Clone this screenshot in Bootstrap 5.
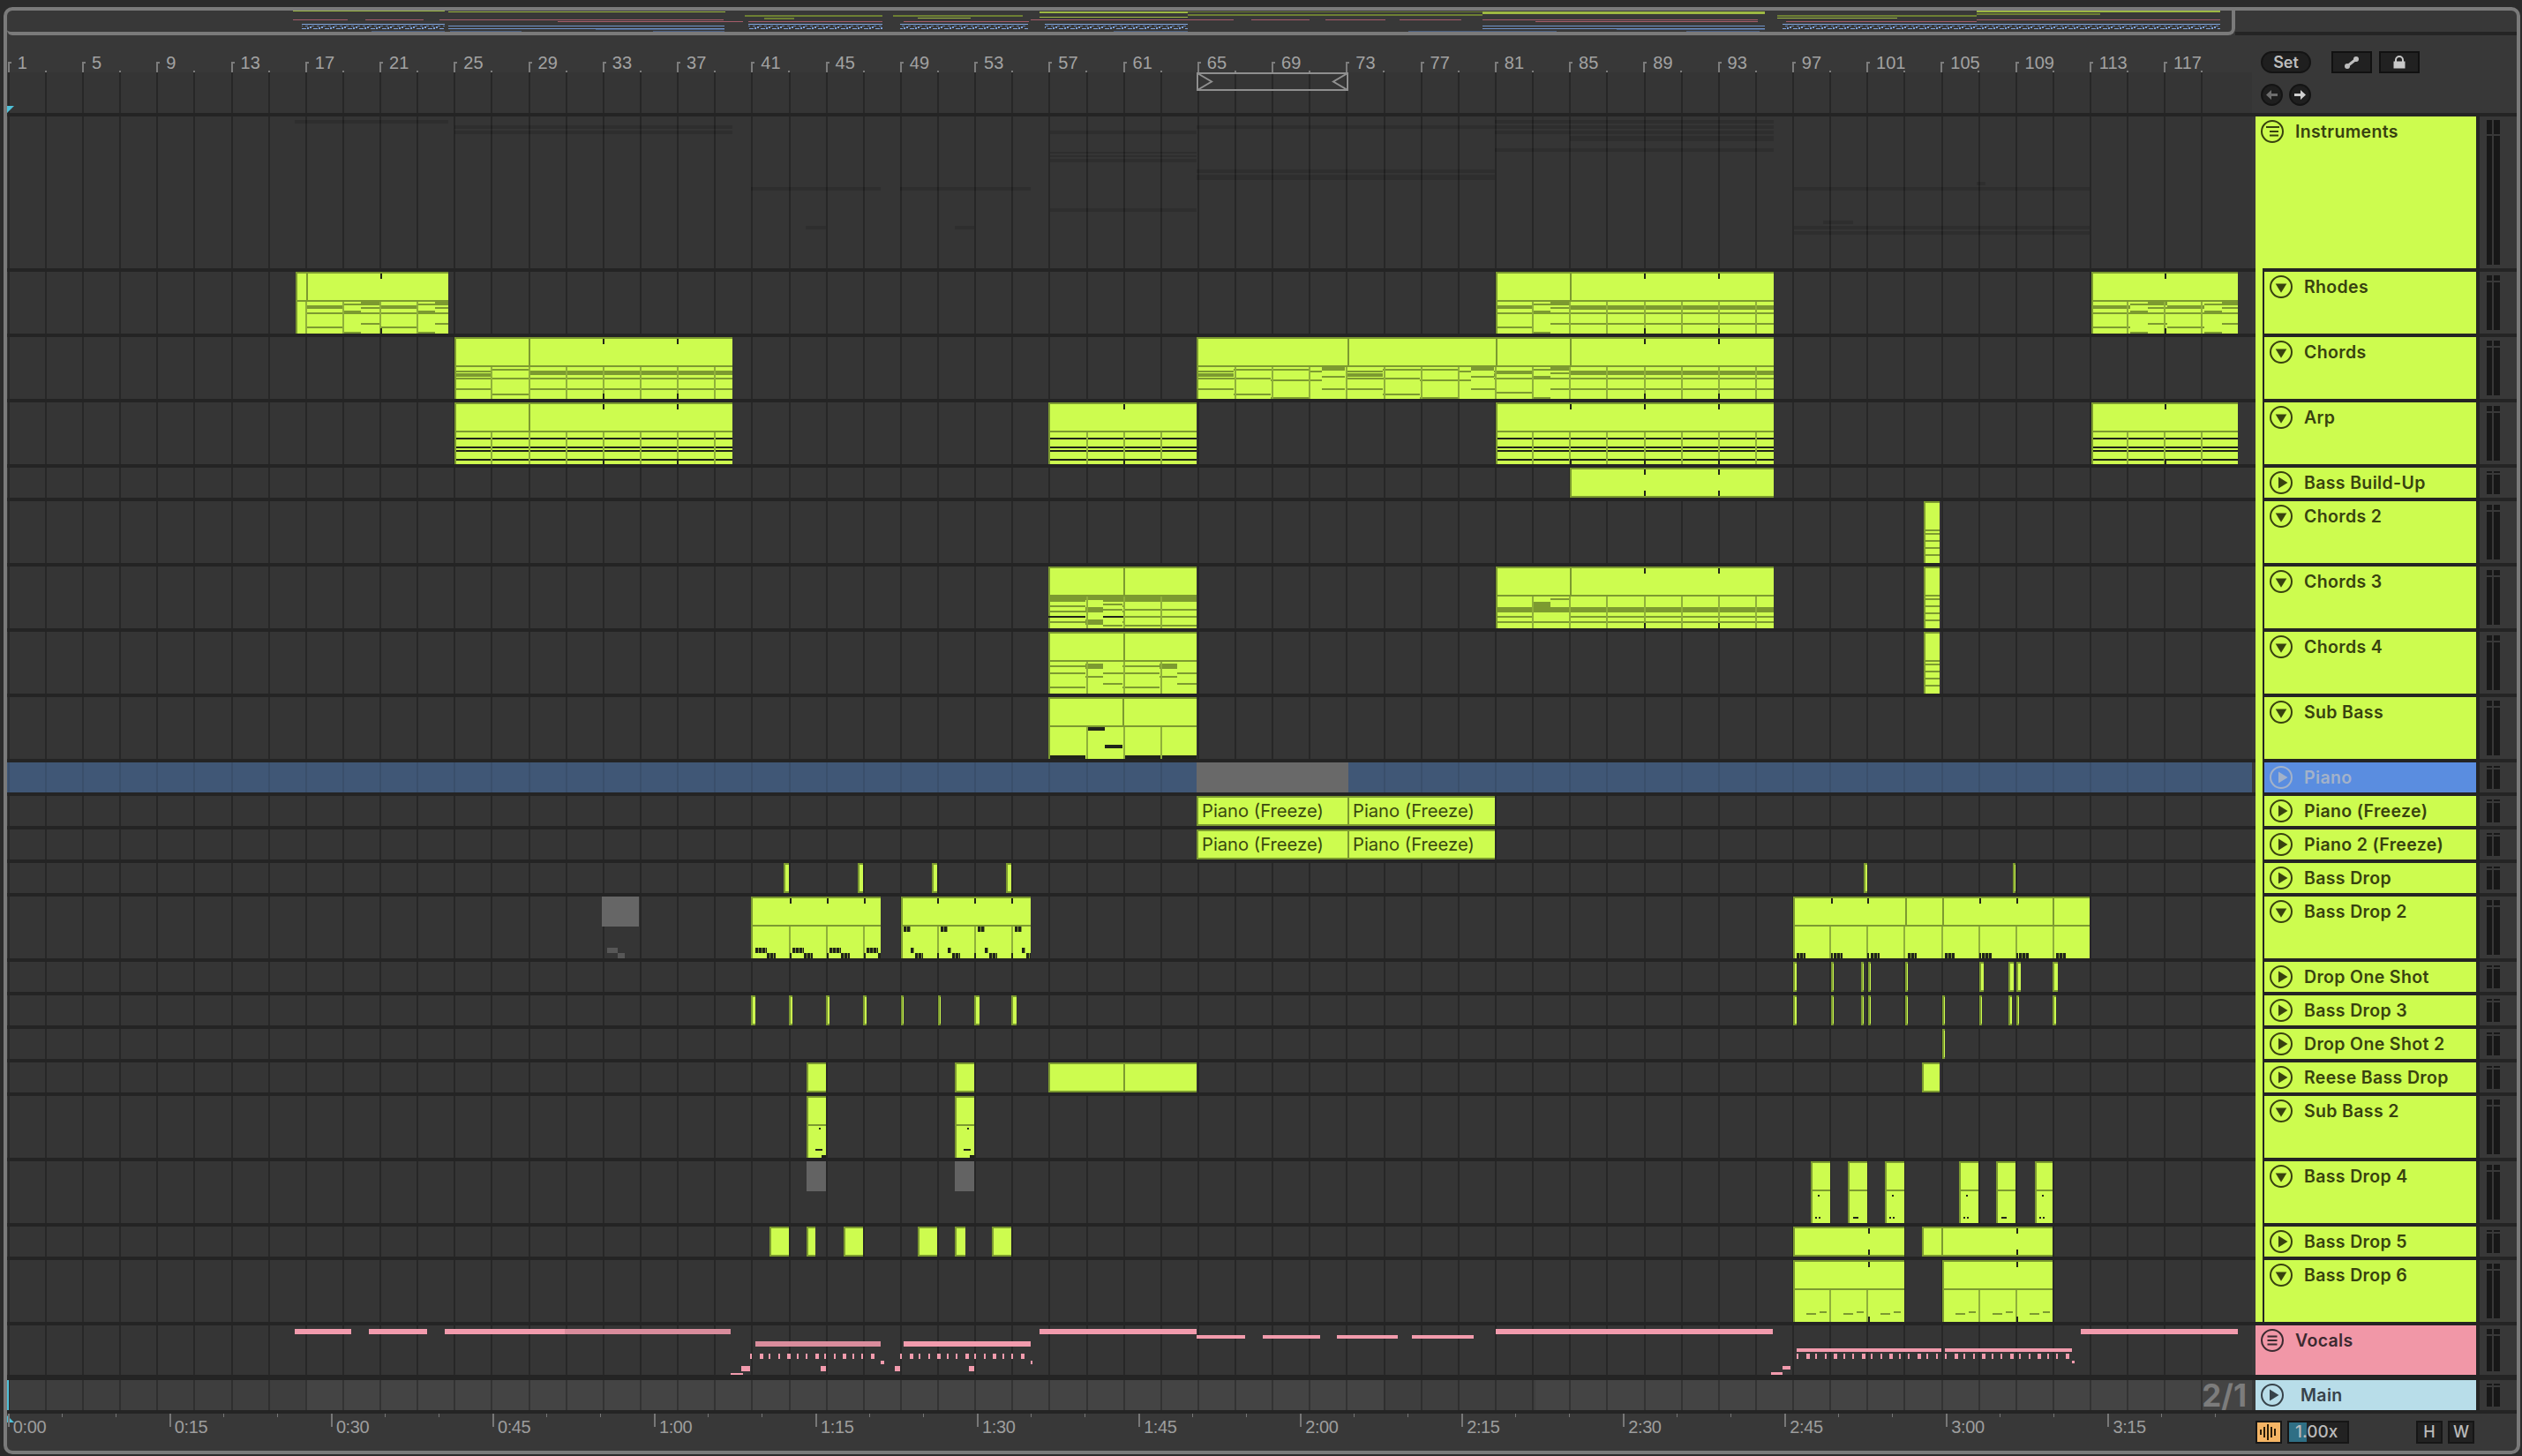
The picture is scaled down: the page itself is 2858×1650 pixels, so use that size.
<!doctype html>
<html lang="en">
<head>
<meta charset="utf-8">
<title>Arrangement</title>
<link rel="stylesheet" href="https://cdn.jsdelivr.net/npm/bootstrap@5.3.0/dist/css/bootstrap.min.css">
<style>
html,body{margin:0;background:#2b2b2b;overflow:hidden}
body{--lime:#cdfc4f;--sep:#242424;--ink:#38420f;font-family:"Inter","Liberation Sans",sans-serif}
.frm{width:2852px;height:1640px;margin:8px 0 0 4px;border:4px solid #7a7a7a;border-radius:10px;background:#383838;overflow:hidden;box-sizing:border-box}
.ovw{height:28px}
.ovbox{border-right:4px solid #7a7a7a;border-bottom:4px solid #7a7a7a;border-bottom-left-radius:6px;border-bottom-right-radius:8px;box-sizing:content-box;height:24px;width:2521px}
.ovbox svg{display:block}
.ovrest{flex:1;border-bottom:4px solid var(--sep)}
.top{height:88px}
.tl{width:2544px}
.rul{height:42px;overflow:hidden;padding-left:.8px;color:#a2a2a2;font:20px "Liberation Sans",sans-serif}
.bar{flex:0 0 84.26px;position:relative;padding:19px 0 0 11px;line-height:24px}
.bar::before{content:"";position:absolute;left:0;top:30px;bottom:0;width:2px;background:#7c7c7c}
.bar::after{content:"";position:absolute;left:42.13px;bottom:0;height:2px;width:2px;background:#7c7c7c}
.hook{position:absolute;left:0;top:30px;width:4px;height:2px;background:#7c7c7c}
.lane0{height:46px}
.lane,.lane0{background-color:#353535;background-image:repeating-linear-gradient(90deg,transparent 0,transparent .8px,#272727 .8px,#272727 2.8px,transparent 2.8px,transparent 42.13px);background-size:2529px 100%;background-repeat:no-repeat;position:relative;width:2544px;flex:none}
.lane.sel{background-color:#405776;background-image:repeating-linear-gradient(90deg,transparent 0,transparent .8px,#3a4f6b .8px,#3a4f6b 2.8px,transparent 2.8px,transparent 42.13px)}
.lane.mn{background-color:#444;background-image:repeating-linear-gradient(90deg,transparent 0,transparent .8px,#333 .8px,#333 2.8px,transparent 2.8px,transparent 42.13px)}
.loc{position:absolute;left:1348px;top:0}
.tri{position:absolute;left:0;width:8px;height:8px;background:#4fc0d8}
.tri.a{top:38px;clip-path:polygon(0 0,100% 0,0 100%)}
.tri.b{top:2px;clip-path:polygon(0 0,100% 100%,0 100%)}
.tri.ln{top:0;width:2px;height:100%}
.rp{padding:18px 0 0 10px}
.row2{margin-top:12px}
.setb{width:57px;height:25px;border-radius:13px;background:#1f1f1f;border:2px solid #141414;color:#bdbdbd;font:600 18px/21px "Inter",sans-serif;text-align:center;margin-right:23px}
.sq{width:46px;height:25px;background:#212121;border:2px solid #111;margin-right:8px}
.circ{width:25px;height:25px;margin-right:7px}
.tks{background:var(--sep);padding:4px 0;display:flex;flex-direction:column;gap:4px}
.h34{height:34px}.h70{height:70px}.h172{height:172px}.h56{height:56px}.h34m{height:34px;margin-top:2px}
.gp{width:4px;background:#383838;flex:none}
.gp2{width:4px;background:var(--sep);flex:none}
.hd{width:250px;flex:none;background:var(--lime);color:var(--ink);font-weight:600;font-size:19.5px;line-height:34px;letter-spacing:.35px;position:relative}
.hd svg{width:26px;height:26px;margin:4px 13px 0 6px;flex:none;color:var(--ink)}
.hd.ch{background:transparent;display:flex}
.stp{width:8px;background:var(--lime);margin-bottom:-4px;flex:none}
.stp.up{margin-top:-4px}
.stp.end{margin-bottom:0}
.bdy{width:240px;margin-left:2px;background:var(--lime);display:flex}
.bdy.sl{background:#5a8de0;color:#a3b2c9}
.bdy.sl svg{color:#a3b2c9}
.hd.vo{background:#f197a7;color:#3b2a30}.hd.vo svg{color:#3b2a30}
.hd.mnn{background:#b8dde9;color:#37424a}.hd.mnn svg{color:#37424a;margin-right:19px}
.mz{width:42px;background:#383838;display:flex;gap:2px;padding:4px 0 4px 8px;flex:none}
.mt{width:6px;display:flex;flex-direction:column;gap:2px}
.mt i{display:block;background:#171717}
.mt i+i{flex:1}
.mt+.mt{width:6.5px}
.c16 .mt i:first-child{height:16px}.c6 .mt i:first-child{height:6px}.c2 .mt i:first-child{height:2px}
.clp{position:absolute;top:0;bottom:0;background:var(--lime);box-shadow:inset 2px 2px 0 #7c9a30;overflow:hidden}
.clp.sh{box-shadow:inset 2px 2px 0 #7c9a30,inset 0 -2px 0 #7c9a30}
.clp b{position:absolute;display:block}
.frz{font:400 20.2px/34px "Inter",sans-serif;color:#3a4810;padding-left:6px;white-space:nowrap}
.blk{position:absolute}
.tm{height:42px;position:relative}
.tmr{width:2544px;overflow:hidden;padding-left:.8px;color:#9d9d9d;font:20px "Liberation Sans",sans-serif;flex:none;position:relative}
.tcell{flex:0 0 183.05px;position:relative;padding:3px 0 0 6px;line-height:24px;letter-spacing:-.4px}
.tcell u{position:absolute;top:0;width:1px;height:4px;background:#777}
.tcell em{position:absolute;left:0;top:0;height:15px;width:2px;background:#777}
.brp{padding:8px 0 0 4px;position:relative;flex:1}
.wav{width:30px;height:26px;background:#f5b565;border:2px solid #161616;margin-right:6px}
.tmpo{width:70px;height:26px;background:#222;border:2px solid #161616;color:#bbb;font:500 19px/22px "Inter",sans-serif;padding-left:7px;position:relative;margin-right:76px}
.tmpo i{position:absolute;left:0;top:0;bottom:0;width:20px;background:#2f6f85}
.tmpo span{position:relative}
.hw{width:30px;height:26px;background:#222;border:2px solid #161616;color:#bbb;font:500 18px/22px "Inter",sans-serif;text-align:center;margin-right:6px}
.sig{position:absolute;right:6px;top:0;font:700 35px/34px "Inter",sans-serif;color:#7c7c7c}
</style>
</head>
<body>
<svg width="0" height="0" class="position-absolute">
<symbol id="pl" viewBox="0 0 26 26"><circle cx="13" cy="13" r="12" fill="none" stroke="currentColor" stroke-width="2"/><path d="M10 6.5 20.5 13 10 19.5Z" fill="currentColor"/></symbol>
<symbol id="dn" viewBox="0 0 26 26"><circle cx="13" cy="13" r="12" fill="none" stroke="currentColor" stroke-width="2"/><path d="M6.7 9.5H19.3L13 19.7Z" fill="currentColor"/></symbol>
<symbol id="gr" viewBox="0 0 26 26"><circle cx="13" cy="13" r="12" fill="none" stroke="currentColor" stroke-width="2"/><path d="M6 8H21M10 13H20M10 17.5H20" stroke="currentColor" stroke-width="2" fill="none"/></symbol>
<symbol id="gv" viewBox="0 0 26 26"><circle cx="13" cy="13" r="12" fill="none" stroke="currentColor" stroke-width="2"/><path d="M7.5 8.5H18.5M7.5 13H18.5M7.5 17.5H18.5" stroke="currentColor" stroke-width="2" fill="none"/></symbol>
</svg>
<div class="frm d-flex flex-column">
  <div class="ovw d-flex">
    <div class="ovbox" id="ovb"></div>
    <div class="ovrest"></div>
  </div>
  <div class="top d-flex">
    <div class="tl d-flex flex-column">
      <div class="rul d-flex" id="bars">
        <div class="bar"><i class="hook"></i>1</div><div class="bar"><i class="hook"></i>5</div><div class="bar"><i class="hook"></i>9</div><div class="bar"><i class="hook"></i>13</div><div class="bar"><i class="hook"></i>17</div><div class="bar"><i class="hook"></i>21</div><div class="bar"><i class="hook"></i>25</div><div class="bar"><i class="hook"></i>29</div><div class="bar"><i class="hook"></i>33</div><div class="bar"><i class="hook"></i>37</div><div class="bar"><i class="hook"></i>41</div><div class="bar"><i class="hook"></i>45</div><div class="bar"><i class="hook"></i>49</div><div class="bar"><i class="hook"></i>53</div><div class="bar"><i class="hook"></i>57</div><div class="bar"><i class="hook"></i>61</div><div class="bar"><i class="hook"></i>65</div><div class="bar"><i class="hook"></i>69</div><div class="bar"><i class="hook"></i>73</div><div class="bar"><i class="hook"></i>77</div><div class="bar"><i class="hook"></i>81</div><div class="bar"><i class="hook"></i>85</div><div class="bar"><i class="hook"></i>89</div><div class="bar"><i class="hook"></i>93</div><div class="bar"><i class="hook"></i>97</div><div class="bar"><i class="hook"></i>101</div><div class="bar"><i class="hook"></i>105</div><div class="bar"><i class="hook"></i>109</div><div class="bar"><i class="hook"></i>113</div><div class="bar"><i class="hook"></i>117</div>
      </div>
      <div class="lane0">
        <i class="tri a"></i>
        <svg class="loc" width="172" height="21" viewBox="0 0 172 21"><path d="M1 1H171V20H1Z M1 1 17 10.5 1 20M171 1 155 10.5 171 20" fill="none" stroke="#8f8f8f" stroke-width="2"/></svg>
      </div>
    </div>
    <div class="rp">
      <div class="d-flex">
        <div class="setb">Set</div>
        <div class="sq d-flex align-items-center justify-content-center"><svg width="18" height="16" viewBox="0 0 18 16"><path d="M4 12 14 4" stroke="#bdbdbd" stroke-width="3"/><circle cx="4" cy="12" r="3" fill="#bdbdbd"/><circle cx="14" cy="4" r="3" fill="#bdbdbd"/></svg></div>
        <div class="sq d-flex align-items-center justify-content-center"><svg width="16" height="15" viewBox="0 0 16 15"><path d="M4 7V5a4 4 0 0 1 8 0v2" fill="none" stroke="#c8c8c8" stroke-width="2"/><rect x="1.500" y="6.500" width="13" height="8" fill="#c8c8c8"/></svg></div>
      </div>
      <div class="d-flex row2">
        <svg class="circ" viewBox="0 0 25 25"><circle cx="12.500" cy="12.500" r="11.500" fill="#1f1f1f" stroke="#141414" stroke-width="2"/><path d="M6 12.500 12 7V11H19V14H12V18Z" fill="#6e6e6e"/></svg>
        <svg class="circ" viewBox="0 0 25 25"><circle cx="12.500" cy="12.500" r="11.500" fill="#1f1f1f" stroke="#141414" stroke-width="2"/><path d="M19 12.500 13 7V11H6V14H13V18Z" fill="#d0d0d0"/></svg>
      </div>
    </div>
  </div>
  <div class="tks" id="tks">
    <div class="trk d-flex h172"><div class="lane"></div><i class="gp"></i><div class="hd d-flex"><svg><use href="#gr"/></svg><span>Instruments</span></div></div>
    <div class="trk d-flex h70"><div class="lane"></div><i class="gp"></i><div class="hd ch"><i class="stp up"></i><div class="bdy"><svg><use href="#dn"/></svg><span>Rhodes</span></div></div></div>
    <div class="trk d-flex h70"><div class="lane"></div><i class="gp"></i><div class="hd ch"><i class="stp"></i><div class="bdy"><svg><use href="#dn"/></svg><span>Chords</span></div></div></div>
    <div class="trk d-flex h70"><div class="lane"></div><i class="gp"></i><div class="hd ch"><i class="stp"></i><div class="bdy"><svg><use href="#dn"/></svg><span>Arp</span></div></div></div>
    <div class="trk d-flex h34"><div class="lane"></div><i class="gp"></i><div class="hd ch"><i class="stp"></i><div class="bdy"><svg><use href="#pl"/></svg><span>Bass Build-Up</span></div></div></div>
    <div class="trk d-flex h70"><div class="lane"></div><i class="gp"></i><div class="hd ch"><i class="stp"></i><div class="bdy"><svg><use href="#dn"/></svg><span>Chords 2</span></div></div></div>
    <div class="trk d-flex h70"><div class="lane"></div><i class="gp"></i><div class="hd ch"><i class="stp"></i><div class="bdy"><svg><use href="#dn"/></svg><span>Chords 3</span></div></div></div>
    <div class="trk d-flex h70"><div class="lane"></div><i class="gp"></i><div class="hd ch"><i class="stp"></i><div class="bdy"><svg><use href="#dn"/></svg><span>Chords 4</span></div></div></div>
    <div class="trk d-flex h70"><div class="lane"></div><i class="gp"></i><div class="hd ch"><i class="stp"></i><div class="bdy"><svg><use href="#dn"/></svg><span>Sub Bass</span></div></div></div>
    <div class="trk d-flex h34"><div class="lane sel"></div><i class="gp"></i><div class="hd ch"><i class="stp"></i><div class="bdy sl"><svg><use href="#pl"/></svg><span>Piano</span></div></div></div>
    <div class="trk d-flex h34"><div class="lane"></div><i class="gp"></i><div class="hd ch"><i class="stp"></i><div class="bdy"><svg><use href="#pl"/></svg><span>Piano (Freeze)</span></div></div></div>
    <div class="trk d-flex h34"><div class="lane"></div><i class="gp"></i><div class="hd ch"><i class="stp"></i><div class="bdy"><svg><use href="#pl"/></svg><span>Piano 2 (Freeze)</span></div></div></div>
    <div class="trk d-flex h34"><div class="lane"></div><i class="gp"></i><div class="hd ch"><i class="stp"></i><div class="bdy"><svg><use href="#pl"/></svg><span>Bass Drop</span></div></div></div>
    <div class="trk d-flex h70"><div class="lane"></div><i class="gp"></i><div class="hd ch"><i class="stp"></i><div class="bdy"><svg><use href="#dn"/></svg><span>Bass Drop 2</span></div></div></div>
    <div class="trk d-flex h34"><div class="lane"></div><i class="gp"></i><div class="hd ch"><i class="stp"></i><div class="bdy"><svg><use href="#pl"/></svg><span>Drop One Shot</span></div></div></div>
    <div class="trk d-flex h34"><div class="lane"></div><i class="gp"></i><div class="hd ch"><i class="stp"></i><div class="bdy"><svg><use href="#pl"/></svg><span>Bass Drop 3</span></div></div></div>
    <div class="trk d-flex h34"><div class="lane"></div><i class="gp"></i><div class="hd ch"><i class="stp"></i><div class="bdy"><svg><use href="#pl"/></svg><span>Drop One Shot 2</span></div></div></div>
    <div class="trk d-flex h34"><div class="lane"></div><i class="gp"></i><div class="hd ch"><i class="stp"></i><div class="bdy"><svg><use href="#pl"/></svg><span>Reese Bass Drop</span></div></div></div>
    <div class="trk d-flex h70"><div class="lane"></div><i class="gp"></i><div class="hd ch"><i class="stp"></i><div class="bdy"><svg><use href="#dn"/></svg><span>Sub Bass 2</span></div></div></div>
    <div class="trk d-flex h70"><div class="lane"></div><i class="gp"></i><div class="hd ch"><i class="stp"></i><div class="bdy"><svg><use href="#dn"/></svg><span>Bass Drop 4</span></div></div></div>
    <div class="trk d-flex h34"><div class="lane"></div><i class="gp"></i><div class="hd ch"><i class="stp"></i><div class="bdy"><svg><use href="#pl"/></svg><span>Bass Drop 5</span></div></div></div>
    <div class="trk d-flex h70"><div class="lane"></div><i class="gp"></i><div class="hd ch"><i class="stp end"></i><div class="bdy"><svg><use href="#dn"/></svg><span>Bass Drop 6</span></div></div></div>
    <div class="trk d-flex h56"><div class="lane"></div><i class="gp"></i><div class="hd vo d-flex"><svg><use href="#gv"/></svg><span>Vocals</span></div></div>
    <div class="trk d-flex h34m"><div class="lane mn"><i class="tri ln"></i><span class="sig">2/1</span></div><i class="gp"></i><div class="hd mnn d-flex"><svg><use href="#pl"/></svg><span>Main</span></div></div>
  </div>
  <div class="tm d-flex">
    <div class="tmr d-flex" id="times">
      <i class="tri b"></i>
      <div class="tcell"><em></em>0:00</div><div class="tcell"><em></em>0:15</div><div class="tcell"><em></em>0:30</div><div class="tcell"><em></em>0:45</div><div class="tcell"><em></em>1:00</div><div class="tcell"><em></em>1:15</div><div class="tcell"><em></em>1:30</div><div class="tcell"><em></em>1:45</div><div class="tcell"><em></em>2:00</div><div class="tcell"><em></em>2:15</div><div class="tcell"><em></em>2:30</div><div class="tcell"><em></em>2:45</div><div class="tcell"><em></em>3:00</div><div class="tcell"><em></em>3:15</div>
    </div>
    <div class="brp d-flex">
      <div class="wav d-flex align-items-center justify-content-center"><svg width="22" height="18" viewBox="0 0 22 18"><path d="M2 6V12M6 3V15M10 0V18M14 3V15M18 5V13" stroke="#2a1d08" stroke-width="2"/></svg></div>
      <div class="tmpo"><i></i><span>1.00x</span></div>
      <div class="hw">H</div><div class="hw">W</div>
    </div>
  </div>
</div>
<script src="https://cdn.jsdelivr.net/npm/bootstrap@5.3.0/dist/js/bootstrap.bundle.min.js"></script>
<script>
(function(){
var D='#7c9a30',K='#20241a',L='#8fb03a',G0=8.8,ST=42.13;
var ST1='repeating-linear-gradient(90deg,#20241a 0,#20241a 3px,#7c9a30 3px,#7c9a30 4px)';
var lanes=document.querySelectorAll('#tks .lane');
document.querySelectorAll('#tks .trk').forEach(function(t,i){
  var h=t.offsetHeight,c=i==0?'c16':(h>=56?'c6':'c2');
  t.insertAdjacentHTML('beforeend','<i class="gp2"></i><div class="mz '+c+'"><div class="mt"><i></i><i></i></div><div class="mt"><i></i><i></i></div></div>');
});
function b(p,x,y,w,h,c){var e=document.createElement('b');e.style.cssText='left:'+x+'px;top:'+y+'px;width:'+w+'px;height:'+h+'px;background:'+c;p.appendChild(e);return e;}
function clip(l,x1,x2,o){
  o=o||{};var e=document.createElement('div');var tall=lanes[l].offsetHeight>=70;
  e.className='clp'+(tall?'':' sh');e.style.left=(x1-8)+'px';e.style.width=(x2-x1)+'px';
  if(o.bg){e.style.background=o.bg;e.style.boxShadow='none';}
  lanes[l].appendChild(e);
  if(tall&&!o.bg)b(e,0,32,x2-x1,2,D);
  (o.n||[]).forEach(function(n){b(e,n[0]-x1,n[2],n[1]-n[0],n[3]-n[2],n[4]||D);});
  if(tall&&!o.bg){for(var i=0;i<62;i++){var g=G0+ST*i;if(g>x1+3&&g<x2-1)b(e,g-x1,34,2,36,L);}}
  (o.v||[]).forEach(function(v){b(e,v-x1,0,2,tall?32:34,D);});
  (o.tk||[]).forEach(function(t){b(e,t-x1,2,2,6,K);b(e,t-x1,tall?64:26,2,6,K);});
  if(o.txt){e.classList.add('frz');e.textContent=o.txt;}
  return e;
}
function rep(s,e,st,p,list,out){out=out||[];for(var k=st;k<e;k+=p){list.forEach(function(n){var a=Math.max(s,k+n[0]),c=Math.min(e,k+n[1]);if(c>a)out.push([a,c,n[2],n[3],n[4]]);});}return out;}
function lines(s,e,l,c){return l.map(function(y){return [s,e,y[0],y[1],c];});}
var rh=[[0,42,38,42],[0,42,46,48],[0,42,62,64],[42,62,44,48],[42,62,68,70],[42,62,36,38],[62,84,34,38],[62,84,40,42],[62,84,46,48],[62,84,58,60]];
var ch=[[0,42,38,40],[0,42,41,45],[0,42,46,48],[0,42,58,60],[42,84,36,38],[42,84,46,48],[42,84,64,66],[84,127,36,38],[84,127,48,50],[84,127,68,70],[127,142,38,40],[127,142,48,50],[142,168,34,38],[142,168,44,46],[142,168,58,60]];
var un=[[38,43],[46,48],[58,60]];
var gh=[[334,508,4,8],[515,830,10,14],[515,830,16,20],[1190,1356,16,20],[1190,1356,40,42],[1190,1356,44,46],[1190,1356,48,52],[1190,1356,104,108],[1356,1694,10,14],[1356,1694,60,64],[1356,1694,66,72],[1694,2010,4,8],[1694,2010,10,14],[1694,2010,16,20],[1779,2010,22,28],[1694,2010,36,40],[851,998,80,84],[1020,1168,80,84],[2033,2368,80,84],[2033,2368,124,128],[2033,2368,130,134],[913,936,124,128],[1082,1104,124,128],[2240,2250,74,78],[2066,2100,118,122]];
gh.forEach(function(g){var d=document.createElement('div');d.className='blk';d.style.cssText='left:'+(g[0]-8)+'px;width:'+(g[1]-g[0])+'px;top:'+g[2]+'px;height:'+(g[3]-g[2])+'px;background:rgba(0,0,0,.13)';lanes[0].appendChild(d);});
clip(1,335,508,{tk:[431],n:rep(347,508,347,84.26,rh),v:[347]});
clip(1,1695,2010,{tk:[1863,1947],v:[1779],n:rep(1695,1779,1695,84.26,rh).concat(lines(1779,2010,un))});
clip(1,2370,2536,{tk:[2453],n:rep(2370,2536,2372,84.26,rh)});
clip(2,515,830,{tk:[683,767],v:[599],n:rep(515,599,515,168.5,ch).concat(lines(599,830,un))});
clip(2,1356,2010,{tk:[1863,1947],v:[1527,1695,1779],n:rep(1356,1695,1356,168.5,ch).concat(rep(1695,1779,1695,84.26,rh),lines(1779,2010,un))});
var ar=[[40,42],[50,52],[54,56],[64,66]];
[[515,830,[683,767],[599]],[1188,1356,[1273],[]],[1695,2010,[1779,1863,1947],[]],[2370,2536,[2453],[]]].forEach(function(c){clip(3,c[0],c[1],{tk:c[2],v:c[3],n:lines(c[0]+2,c[1],ar,K)});});
clip(4,1779,2010,{tk:[1863,1947]});
var sl=[[36,38],[44,46],[52,54],[60,62]];
clip(5,2180,2198,{n:lines(2180,2198,sl)});clip(6,2180,2198,{n:lines(2180,2198,sl)});clip(7,2180,2198,{n:lines(2180,2198,sl)});
var c3=[[0,42,34,40],[0,42,44,46],[0,42,50,52],[0,42,56,58,K],[0,42,62,64],[42,62,34,38],[42,62,46,52],[42,62,60,66],[62,84,34,40],[62,84,42,44],[62,84,48,50],[62,84,56,58,K],[62,84,66,68]];
clip(6,1188,1356,{v:[1273],n:rep(1188,1273,1188,84.26,c3).concat(lines(1273,1356,[[34,40],[48,50],[56,58],[66,68]]))});
clip(6,1695,2010,{tk:[1863,1947],v:[1779],n:rep(1695,1779,1695,84.26,[[0,84,46,52],[0,42,56,58],[42,62,40,46],[62,84,36,38],[0,84,62,64]]).concat(lines(1779,2010,[[46,52],[56,58],[62,64]]))});
clip(7,1188,1356,{v:[1273],n:rep(1188,1356,1188,84.26,[[0,42,38,40],[0,42,46,48],[0,42,62,64],[42,62,36,42],[42,62,50,52],[62,84,46,48],[62,84,58,60]])});
clip(8,1188,1356,{v:[1272],n:[[1231,1252,34,38,K],[1252,1272,54,58,K],[1190,1230,66,70,K],[1274,1356,66,70,K]]});
clip(9,1356,1528,{bg:'#696969'});
[10,11].forEach(function(l){clip(l,1356,1527,{txt:'Piano (Freeze)'});clip(l,1527,1694,{txt:'Piano (Freeze)'});});
[[888,894],[972,978],[1056,1062],[1140,1146],[2112,2116],[2281,2284]].forEach(function(c){clip(12,c[0],c[1]);});
function bd2(x1,x2,top){var n=[];for(var k=x1;k<x2;k+=ST){if(top){n.push([k+3.5,k+11,34,40,ST1]);n.push([k+11,k+15,58,64,ST1]);n.push([k+16,k+25,64,70,ST1]);}else{n.push([k+5.5,k+18,58,64,ST1]);n.push([k+18,k+28,64,70,ST1]);}}return n;}
clip(13,850.5,998,{tk:[895,937,979],n:bd2(850.5,998)});
clip(13,1020.5,1168,{tk:[1062,1104,1146],n:bd2(1020.5,1168,1)});
clip(13,2032,2368,{tk:[2075,2116,2243,2285],v:[2158.6,2200.5,2326.4],n:rep(2034,2368,2032,42.13,[[3.5,14,64,70,ST1]])});
clip(13,682,724,{bg:'#666'}).style.bottom='36px';
[[680,692,58,64],[692,700,64,70]].forEach(function(g){var d=document.createElement('div');d.className='blk';d.style.cssText='left:'+g[0]+'px;top:'+g[2]+'px;width:'+(g[1]-g[0])+'px;height:'+(g[3]-g[2])+'px;background:#575757';lanes[13].appendChild(d);});
[[2032,2036],[2075,2078],[2108.6,2112],[2116.6,2120],[2158.6,2162],[2242.5,2248],[2276,2282],[2284.5,2290],[2326.4,2332]].forEach(function(c){clip(14,c[0],c[1]);});
[[850.5,856],[894,898],[936,940],[978,982],[1020.5,1024],[1062.5,1066],[1104,1110],[1146,1152],[2032,2036],[2074.6,2078],[2108.6,2112],[2116.6,2120],[2158.6,2162],[2200.5,2204],[2242.5,2246],[2276.4,2280],[2284.5,2288],[2326.4,2330]].forEach(function(c){clip(15,c[0],c[1]);});
clip(16,2200.5,2204);
[[914,936],[1082,1104],[1188,1356],[2178,2198]].forEach(function(c,i){clip(17,c[0],c[1],i==2?{v:[1273]}:{});});
[914,1082].forEach(function(x){clip(18,x,x+22,{n:[[x+14,x+16,36,38,K],[x+10,x+18,60,62,K],[x+17,x+22,67,70,K]]});});
[914,1082].forEach(function(x){clip(19,x,x+22,{bg:'#636363'}).style.bottom='36px';});
[[2052,2074,0],[2094,2116,1],[2136,2158,0],[2220,2242,0],[2262,2284,1],[2306,2326,0]].forEach(function(c){var x=c[0];clip(19,x,c[1],{n:c[2]?[[x+6,x+12,63,65,K]]:[[x+8,x+10,38,40,K],[x+5,x+7,63,65,K],[x+9,x+11,63,65,K]]});});
[[872,894],[914,924],[956,978],[1040,1062],[1082,1094],[1124,1146]].forEach(function(c){clip(20,c[0],c[1]);});
clip(20,2032,2158,{tk:[2116.6]});clip(20,2178,2326,{tk:[2285],v:[2200]});
clip(21,2032,2158,{tk:[2116.6],n:rep(2034,2158,2032,42.13,[[15,26,60,62],[30,38,58,60]])});
clip(21,2200.5,2326,{tk:[2285],n:rep(2202,2326,2200.5,42.13,[[15,26,60,62],[30,38,58,60]])});
var P='#f29bad',Q='#d98c9c';
function vo(x1,x2,y1,y2,c){var d=document.createElement('div');d.className='blk';d.style.cssText='left:'+(x1-8)+'px;width:'+(x2-x1)+'px;top:'+(y1-1502)+'px;height:'+(y2-y1)+'px;background:'+(c||P);lanes[22].appendChild(d);}
[[334,398],[418,484],[504,640],[1178,1356],[1695,2009],[2358,2536]].forEach(function(a){vo(a[0],a[1],1506,1512);});vo(640,828,1506,1512,Q);
[[1356,1411],[1431,1496],[1515,1584],[1600,1670]].forEach(function(a){vo(a[0],a[1],1513,1517);});
vo(856,998,1520,1526,Q);vo(1024,1168,1520,1526);
vo(2036,2200,1528,1532);vo(2204,2348,1528,1532);
function tk(s,e){var i=0;for(var x=s;x<e;x+=10.53){vo(x,x+(i%3==1?4:2),1534,1540);i++;}}
tk(850,990);tk(1020,1160);tk(2036,2198);tk(2204,2344);
[[998,1002,1542,1546],[1168,1170,1542,1546],[840,850,1548,1554],[930,936,1548,1554],[1014,1020,1548,1554],[1098,1104,1548,1554],[828,842,1556,1558],[2348,2351,1542,1545],[2020,2029,1548,1552],[2007,2020,1555,1558]].forEach(function(a){vo(a[0],a[1],a[2],a[3]);});
// Main lane tone bands
[[8,346],[1568,1740]].forEach(function(a){var d=document.createElement('div');d.className='blk';d.style.cssText='left:'+(a[0]-8)+'px;width:'+(a[1]-a[0])+'px;top:0;bottom:0;background:rgba(0,0,0,.08)';lanes[23].insertBefore(d,lanes[23].firstChild);});
document.querySelectorAll('#times .tcell').forEach(function(c){c.insertAdjacentHTML('beforeend','<u style="left:61px"></u><u style="left:122px"></u>');});
var s='<svg width="2521" height="24" viewBox="8 12 2521 24"><defs><pattern id="wf" width="13" height="6" patternUnits="userSpaceOnUse"><rect x="0" y="0" width="2" height="2" fill="#7fa4dc"/><rect x="4" y="2" width="5" height="2" fill="#7fa4dc"/><rect x="10" y="1" width="2" height="3" fill="#7fa4dc"/><rect x="0" y="3" width="13" height="1" fill="#7fa4dc"/><rect x="2" y="5" width="3" height="1" fill="#5f80b4"/><rect x="8" y="5" width="3" height="1" fill="#5f80b4"/></pattern></defs>';
function R(x1,x2,y,h,c){s+='<rect x="'+x1+'" y="'+y+'" width="'+(x2-x1)+'" height="'+h+'" fill="'+c+'"/>';}
var GN='#9db843',GD='#6d7f33',PK='#a55c6a',BL='#6f93c8',BD='#4a5e80';
R(332,504,12,1,GN);R(508,822,13,1,GN);R(1178,1346,13,2,GN);R(1178,1346,19,1,GN);R(1346,1680,13,1,GD);R(1346,1680,16,2,GD);R(1680,2000,13,3,GN);R(844,1000,17,2,GD);R(866,900,20,2,GD);R(1012,1159,17,2,GD);R(1040,1100,20,1,GN);R(2014,2240,17,2,GD);R(2014,2150,20,1,GN);R(2240,2516,12,2,GN);R(2240,2380,15,2,GD);
[[332,394],[414,480],[498,820],[1168,1346],[1346,1398],[1418,1484],[1502,1570],[1586,1656],[1680,1992],[2240,2516]].forEach(function(a){R(a[0],a[1],22,1,PK);});
[[632,820],[820,842],[1740,1992],[848,1000],[1024,1166],[2024,2240]].forEach(function(a){R(a[0],a[1],24,1,PK);});
[[342,504],[848,1000],[1020,1165],[1184,1346],[2020,2516]].forEach(function(a){s+='<rect x="'+a[0]+'" y="27" width="'+(a[1]-a[0])+'" height="6" fill="url(#wf)"/>';});
[[508,821],[1680,2000]].forEach(function(a){R(a[0],a[1],29,1,BL);R(a[0],a[1],32,1,BL);});
R(675,821,33,1,BD);R(1832,2000,33,1,BD);
[[421,504],[510,591],[740,821],[1262,1346],[1596,1764],[1911,1994]].forEach(function(a){R(a[0],a[1],35,1,BD);});
s+='</svg>';document.getElementById('ovb').innerHTML=s;
})();
</script>
</body>
</html>
